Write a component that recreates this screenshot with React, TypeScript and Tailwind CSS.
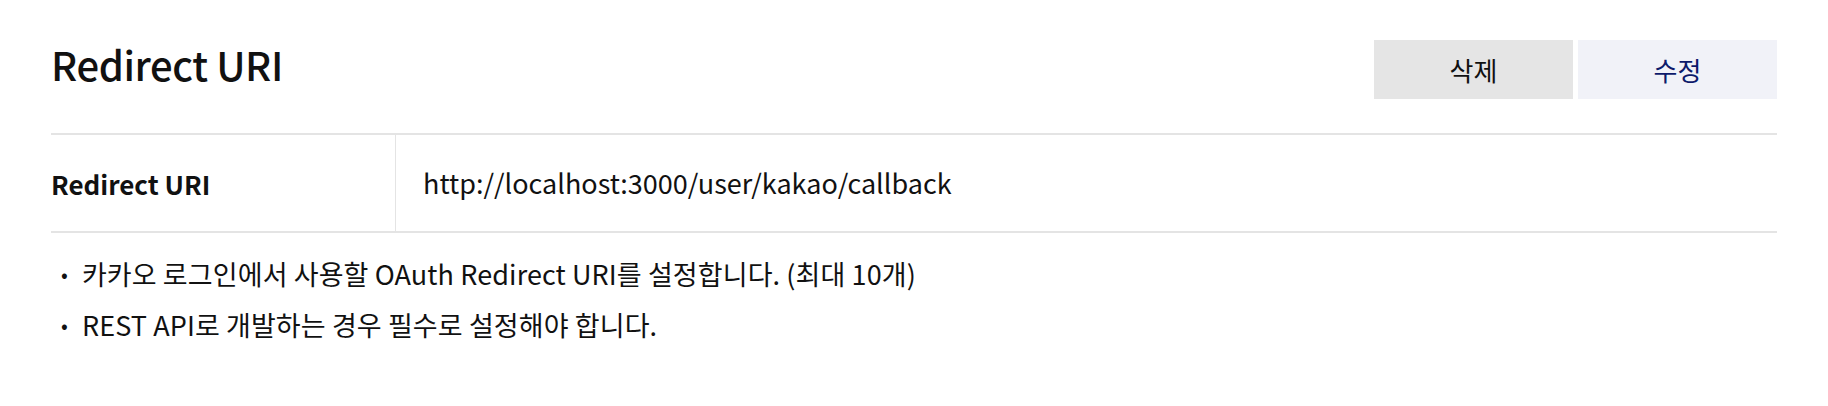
export default function App() {
  return (
    <div
      className="w-full bg-white px-[51px] pt-[40px] text-[#111]"
      style={{ fontFamily: '"Noto Sans CJK KR", "Noto Sans", sans-serif' }}
    >
      <div className="flex items-start justify-between">
        <h2 className="mt-[4px] text-[40px] font-medium leading-none tracking-[-0.4px]">Redirect URI</h2>
        <div className="flex gap-[5px]">
          <button className="h-[59px] w-[199px] bg-[#e5e5e5] text-[26px] text-[#111]">삭제</button>
          <button className="h-[59px] w-[199px] bg-[#f1f2f8] text-[26px] text-[#0d1a6b]">수정</button>
        </div>
      </div>

      <div className="mt-[34px] flex border-y-2 border-[#e4e4e4]">
        <div className="flex h-[96px] w-[345px] items-center border-r border-[#e4e4e4] text-[26px] font-bold">
          Redirect URI
        </div>
        <div className="flex items-center pl-[27px] text-[27px]">http://localhost:3000/user/kakao/callback</div>
      </div>

      <ul className="mt-[22px] flex flex-col gap-[13px] pl-[10px] text-[27px] tracking-[0.1px]">
        <li className="flex items-center gap-[14px] leading-[38px]">
          <span className="text-[20px]">•</span>
          카카오 로그인에서 사용할 OAuth Redirect URI를 설정합니다. (최대 10개)
        </li>
        <li className="flex items-center gap-[14px] leading-[38px]">
          <span className="text-[20px]">•</span>
          REST API로 개발하는 경우 필수로 설정해야 합니다.
        </li>
      </ul>
    </div>
  );
}
